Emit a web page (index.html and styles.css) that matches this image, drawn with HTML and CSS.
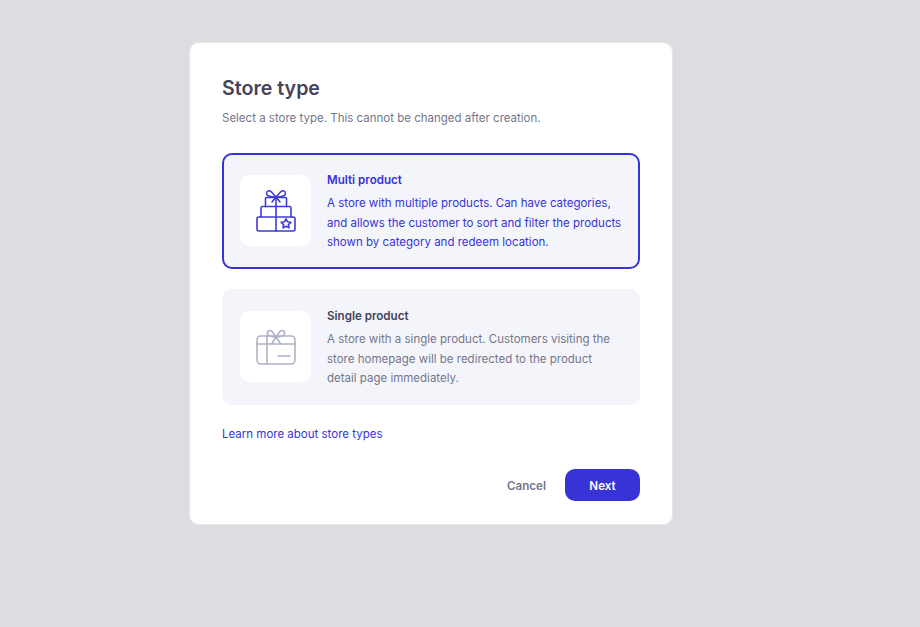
FILE: index.html
```html
<!DOCTYPE html>
<html lang="en">
<head>
  <meta charset="UTF-8" />
  <meta name="viewport" content="width=device-width, initial-scale=1.0" />
  <title>Store type</title>
  <link rel="stylesheet" href="styles.css">
</head>
<body>
  <div class="modal">
    <h1>Store type</h1>
    <p class="subtitle">Select a store type. This cannot be changed after creation.</p>

    <div class="option option-active">
      <div class="option-icon">
        <svg width="40" height="44" viewBox="0 0 40 44" fill="none" stroke="currentColor" stroke-width="1.6" stroke-linecap="round" stroke-linejoin="round">
          <rect x="1" y="28" width="38" height="14" rx="2" />
          <path d="M5 28v-9a1.500 1.500 0 0 1 1.500-1.500h27a1.500 1.500 0 0 1 1.500 1.500v9" />
          <path d="M9.500 17.500v-8a1 1 0 0 1 1-1h19a1 1 0 0 1 1 1v8" />
          <path d="M20 8.500v33.500" />
          <path d="M20 8l-5-5.500c-1.500-1.500-4.500-.5-4.500 1.800 0 2.500 3 3.700 9.500 3.700 6.500 0 9.500-1.200 9.500-3.700 0-2.300-3-3.300-4.500-1.800z" />
          <path d="M20 8l-4 5M20 8l4 5" />
          <path d="M30 29.800l1.500 3 3.300.5-2.400 2.300.6 3.300-3-1.600-3 1.600.6-3.300-2.400-2.300 3.300-.5z" />
        </svg>
      </div>
      <div class="option-text">
        <h2>Multi product</h2>
        <p>A store with multiple products. Can have categories, and allows the customer to sort and filter the products shown by category and redeem location.</p>
      </div>
    </div>

    <div class="option">
      <div class="option-icon">
        <svg width="40" height="36" viewBox="0 0 40 36" fill="none" stroke="currentColor" stroke-width="1.6" stroke-linecap="round" stroke-linejoin="round">
          <rect x="1" y="7" width="38" height="28" rx="4" />
          <path d="M1 15h38" />
          <path d="M11 7v28" />
          <path d="M22 27h12" />
          <path d="M20 8l-4-5.500c-1.500-2-5.500-.5-4.500 2.300C12.300 7 16 8 20 8c4 0 7.700-1 8.500-3.200 1-2.800-3-4.300-4.500-2.300z" />
          <path d="M20 8l-4 6.500M20 8l4.500 6.500" />
        </svg>
      </div>
      <div class="option-text">
        <h2>Single product</h2>
        <p>A store with a single product. Customers visiting the store homepage will be redirected to the product detail page immediately.</p>
      </div>
    </div>

    <a class="learn" href="#">Learn more about store types</a>

    <div class="actions">
      <button class="btn btn-cancel">Cancel</button>
      <button class="btn btn-next">Next</button>
    </div>
  </div>
</body>
</html>
```

FILE: styles.css
```css
body {
  margin: 0;
  height: 627px;
  overflow: hidden;
  font-family: Inter, sans-serif;
  background-color: #dcdde1;
}
.modal {
  box-sizing: border-box;
  width: 484px;
  height: 483px;
  margin: 42px 0 0 189px;
  padding: 31px 32px;
  background-color: #ffffff;
  border: 1px solid #e8e9ed;
  border-radius: 10px;
}
h1 {
  margin: 0;
  font-size: 19.600px;
  line-height: 28px;
  font-weight: 600;
  color: #45445a;
}
.subtitle {
  margin: 6px 0 0;
  font-size: 11.500px;
  line-height: 20px;
  color: #75758a;
}
.option {
  box-sizing: border-box;
  display: flex;
  align-items: center;
  gap: 16px;
  height: 116px;
  margin-top: 20px;
  padding: 0 16px 0 18px;
  background-color: #f4f5fb;
  border-radius: 10px;
  color: #b0b2c7;
}
.option-active {
  margin-top: 25px;
  border: 2px solid #3733d6;
  padding: 0 14px 0 16px;
  color: #3f3bd6;
}
.option-icon {
  flex: none;
  display: flex;
  align-items: center;
  justify-content: center;
  width: 71px;
  height: 71px;
  margin-bottom: 1px;
  background-color: #ffffff;
  border-radius: 10px;
}
.option-text {
  padding-top: 2px;
}
.option-text h2 {
  margin: 0;
  font-size: 11.600px;
  line-height: 18px;
  font-weight: 600;
  color: #45445a;
}
.option-text p {
  margin: 5px 0 0;
  font-size: 11.500px;
  line-height: 19.500px;
  color: #75758a;
}
.option-active h2, .option-active p {
  color: #3733d6;
}
.learn {
  display: block;
  margin-top: 19px;
  font-size: 11.500px;
  line-height: 20px;
  color: #3733d6;
  text-decoration: none;
}
.actions {
  display: flex;
  justify-content: flex-end;
  align-items: center;
  gap: 19px;
  margin-top: 25px;
}
.btn {
  padding: 1px 0 0;
  border: none;
  font-family: Inter, sans-serif;
  font-size: 11.600px;
  font-weight: 600;
  cursor: pointer;
}
.btn-cancel {
  background: none;
  color: #75758a;
}
.btn-next {
  width: 75px;
  height: 32px;
  background-color: #3733d6;
  color: #ffffff;
  border-radius: 10px;
}
```
